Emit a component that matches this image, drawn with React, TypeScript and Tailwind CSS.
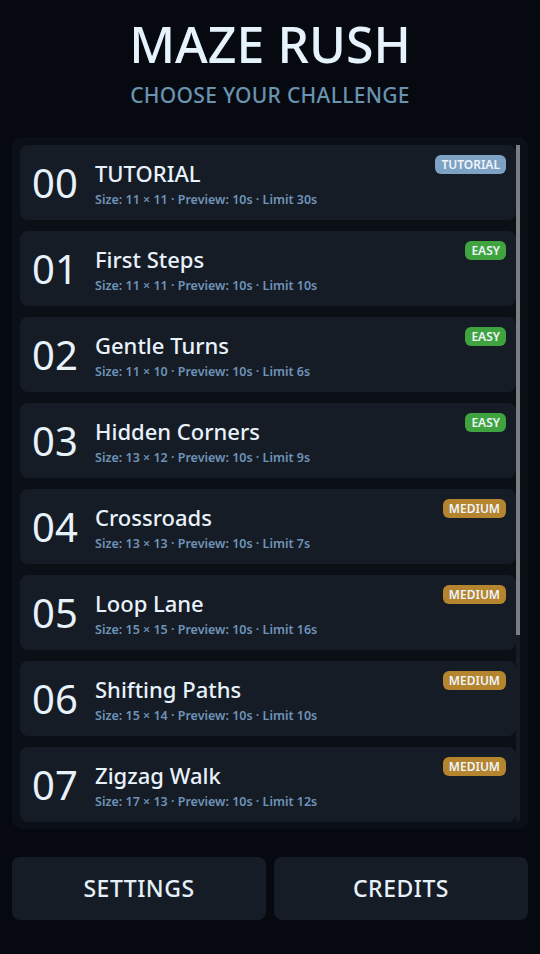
const FONT = { fontFamily: '"Noto Sans", "Open Sans", sans-serif' }

type Level = {
  num: string
  name: string
  size: string
  preview: number
  limit: number
  tier: "TUTORIAL" | "EASY" | "MEDIUM"
}

const LEVELS: Level[] = [
  { num: "00", name: "TUTORIAL", size: "11 × 11", preview: 10, limit: 30, tier: "TUTORIAL" },
  { num: "01", name: "First Steps", size: "11 × 11", preview: 10, limit: 10, tier: "EASY" },
  { num: "02", name: "Gentle Turns", size: "11 × 10", preview: 10, limit: 6, tier: "EASY" },
  { num: "03", name: "Hidden Corners", size: "13 × 12", preview: 10, limit: 9, tier: "EASY" },
  { num: "04", name: "Crossroads", size: "13 × 13", preview: 10, limit: 7, tier: "MEDIUM" },
  { num: "05", name: "Loop Lane", size: "15 × 15", preview: 10, limit: 16, tier: "MEDIUM" },
  { num: "06", name: "Shifting Paths", size: "15 × 14", preview: 10, limit: 10, tier: "MEDIUM" },
  { num: "07", name: "Zigzag Walk", size: "17 × 13", preview: 10, limit: 12, tier: "MEDIUM" },
]

const TIER_STYLES: Record<Level["tier"], string> = {
  TUTORIAL: "bg-[#7ea2c4]",
  EASY: "bg-[#3fa43f]",
  MEDIUM: "bg-[#b4842f]",
}

function LevelCard({ level }: { level: Level }) {
  return (
    <div className="relative flex h-[75px] shrink-0 items-center rounded-lg bg-[#151c26] pl-3">
      <div className="w-[63px] text-[40px] leading-none text-[#e8f2fa]">{level.num}</div>
      <div className="flex flex-col pt-[3px]">
        <div className="text-[22px] font-medium leading-[26px] text-[#e8f2fa]">{level.name}</div>
        <div className="mt-[5px] text-[12.5px] font-semibold leading-[18px] text-[#6f93b7]">
          Size: {level.size} · Preview: {level.preview}s · Limit {level.limit}s
        </div>
      </div>
      <span
        className={`absolute right-[10px] top-[10px] rounded-md px-[6px] text-[12px] font-semibold leading-[19px] text-[#eef5fb] ${TIER_STYLES[level.tier]}`}
      >
        {level.tier}
      </span>
    </div>
  )
}

export default function App() {
  return (
    <div style={FONT} className="flex h-screen flex-col bg-[#060a10]">
      {/* Header */}
      <div className="flex h-[137px] shrink-0 flex-col items-center">
        <h1 className="mt-[19px] text-[50px] font-medium leading-[50px] text-[#e6f3fd]">MAZE RUSH</h1>
        <p className="mt-[14px] text-[21px] font-medium leading-[24px] tracking-[0.3px] text-[#6a93b0]">
          CHOOSE YOUR CHALLENGE
        </p>
      </div>

      {/* Level list */}
      <div className="relative mx-3 min-h-0 flex-1 overflow-hidden rounded-[10px] bg-[#0b1017] p-2">
        <div className="mr-1 flex flex-col gap-[11px]">
          {LEVELS.map((level) => (
            <LevelCard key={level.num} level={level} />
          ))}
        </div>
        <div className="absolute bottom-2 right-2 top-2 w-1 bg-[#181c22]">
          <div className="h-[490px] w-full bg-[#7b7d80]" />
        </div>
      </div>

      {/* Footer buttons */}
      <div className="mx-3 mb-[34px] mt-7 grid h-[63px] shrink-0 grid-cols-2 gap-2">
        <button className="rounded-lg bg-[#151c26] text-[23px] font-medium tracking-[0.5px] text-[#e6f0f8]">
          SETTINGS
        </button>
        <button className="rounded-lg bg-[#151c26] text-[23px] font-medium tracking-[0.5px] text-[#e6f0f8]">
          CREDITS
        </button>
      </div>
    </div>
  )
}
